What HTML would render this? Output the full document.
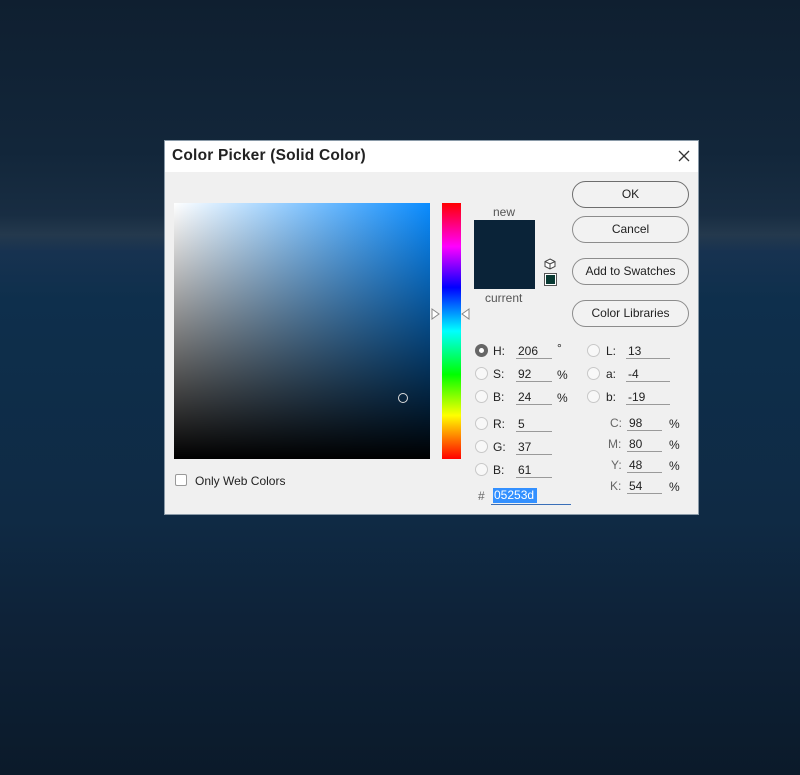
<!DOCTYPE html>
<html><head><style>
*{margin:0;padding:0;box-sizing:border-box}
body{width:800px;height:775px;overflow:hidden;position:relative;font-family:"Liberation Sans",sans-serif;
background:linear-gradient(180deg,#0f1f30 0px,#12263a 150px,#182d42 215px,#24394d 235px,#173250 252px,#0e2f4c 300px,#0f2a44 520px,#0e2238 620px,#0b1a2a 775px);}
.a{position:absolute}
.dlg{left:164px;top:140px;width:535px;height:375px;background:#f0f0f0;border:1px solid #8a9aa8}
.title{left:0;top:0;width:533px;height:31px;background:#fff}
.t{font-size:12px;color:#222;white-space:nowrap}
.btn{position:absolute;left:407px;width:117px;height:27px;border:1px solid #8c8c8c;border-radius:14px;font-size:12px;color:#222;text-align:center;line-height:25px;background:#f2f2f2}
.rad{position:absolute;width:13px;height:13px;border-radius:50%;border:1px solid #c8c8c8;background:#f8f8f8}
.fld{position:absolute;border-bottom:1px solid #9a9a9a;height:15px;font-size:12px;color:#222;padding-left:2px;line-height:14px}
</style></head><body>
<div class="a dlg">
 <div class="a title"></div>
 <div class="a" style="left:7px;top:6px;font-size:15.5px;font-weight:bold;color:#222;letter-spacing:0.2px">Color Picker (Solid Color)</div>
 <svg class="a" style="left:512px;top:8px" width="14" height="14"><path d="M2 2L12 12M12 2L2 12" stroke="#333" stroke-width="1.3"/></svg>
 <div class="a" style="left:9px;top:62px;width:256px;height:256px;background:linear-gradient(to top,#000,rgba(0,0,0,0)),linear-gradient(to right,#fff,#0a8cff)"></div>
 <div class="a" style="left:233px;top:252px;width:10px;height:10px;border:1px solid #ddd;border-radius:50%"></div>
 <div class="a" style="left:277px;top:62px;width:19px;height:256px;background:linear-gradient(to bottom,#f00,#f0f 17%,#00f 33%,#0ff 50%,#0f0 67%,#ff0 83%,#f00)"></div>
 <svg class="a" style="left:266px;top:167px" width="40" height="12"><path d="M1 1L8 6L1 11Z M38 1L31 6L38 11Z" fill="#fff" stroke="#888"/></svg>
 <div class="a t" style="left:328px;top:64px;color:#555">new</div>
 <div class="a" style="left:309px;top:79px;width:61px;height:69px;background:#0a2338"></div>
 <div class="a t" style="left:320px;top:150px;color:#555">current</div>
 <svg class="a" style="left:379px;top:117px" width="12" height="12"><path d="M6 1L11 3.5V8.5L6 11L1 8.5V3.5Z M1 3.5L6 6L11 3.5 M6 6V11" fill="#fff" stroke="#444"/></svg>
 <div class="a" style="left:379px;top:132px;width:13px;height:13px;border:1px solid #555;background:#093a33;box-shadow:inset 0 0 0 1px #fff"></div>
 <div class="btn" style="top:40px;border-color:#6e6e6e">OK</div>
 <div class="btn" style="top:75px">Cancel</div>
 <div class="btn" style="top:117px">Add to Swatches</div>
 <div class="btn" style="top:159px">Color Libraries</div>

 <div class="rad" style="left:310px;top:203px;border:4px solid #666;background:#fff"></div><div class="a t" style="left:328px;top:203px">H:</div><div class="fld" style="left:351px;top:203px;width:36px">206</div><div class="a t" style="left:392px;top:200px">°</div>
 <div class="rad" style="left:310px;top:226px"></div><div class="a t" style="left:328px;top:226px">S:</div><div class="fld" style="left:351px;top:226px;width:36px">92</div><div class="a t" style="left:392px;top:227px">%</div>
 <div class="rad" style="left:310px;top:249px"></div><div class="a t" style="left:328px;top:249px">B:</div><div class="fld" style="left:351px;top:249px;width:36px">24</div><div class="a t" style="left:392px;top:250px">%</div>
 <div class="rad" style="left:310px;top:276px"></div><div class="a t" style="left:328px;top:276px">R:</div><div class="fld" style="left:351px;top:276px;width:36px">5</div>
 <div class="rad" style="left:310px;top:299px"></div><div class="a t" style="left:328px;top:299px">G:</div><div class="fld" style="left:351px;top:299px;width:36px">37</div>
 <div class="rad" style="left:310px;top:322px"></div><div class="a t" style="left:328px;top:322px">B:</div><div class="fld" style="left:351px;top:322px;width:36px">61</div>

 <div class="rad" style="left:422px;top:203px"></div><div class="a t" style="left:441px;top:203px">L:</div><div class="fld" style="left:461px;top:203px;width:44px">13</div>
 <div class="rad" style="left:422px;top:226px"></div><div class="a t" style="left:441px;top:226px">a:</div><div class="fld" style="left:461px;top:226px;width:44px">-4</div>
 <div class="rad" style="left:422px;top:249px"></div><div class="a t" style="left:441px;top:249px">b:</div><div class="fld" style="left:461px;top:249px;width:44px">-19</div>

 <div class="a t" style="left:445px;top:275px;color:#666">C:</div><div class="fld" style="left:462px;top:275px;width:35px">98</div><div class="a t" style="left:504px;top:276px">%</div>
 <div class="a t" style="left:443px;top:296px;color:#666">M:</div><div class="fld" style="left:462px;top:296px;width:35px">80</div><div class="a t" style="left:504px;top:297px">%</div>
 <div class="a t" style="left:446px;top:317px;color:#666">Y:</div><div class="fld" style="left:462px;top:317px;width:35px">48</div><div class="a t" style="left:504px;top:318px">%</div>
 <div class="a t" style="left:445px;top:338px;color:#666">K:</div><div class="fld" style="left:462px;top:338px;width:35px">54</div><div class="a t" style="left:504px;top:339px">%</div>

 <div class="a t" style="left:313px;top:348px;color:#666">#</div>
 <div class="a" style="left:326px;top:346px;width:80px;height:18px;border-bottom:1px solid #3a6fb8"></div>
 <div class="a" style="left:328px;top:347px;width:44px;height:15px;background:#3390ff;color:#fff;font-size:12px;line-height:15px;padding-left:1px">05253d</div>

 <div class="a" style="left:10px;top:333px;width:12px;height:12px;border:1px solid #999;background:#fff;border-radius:2px"></div>
 <div class="a t" style="left:30px;top:333px">Only Web Colors</div>
</div>
</body></html>
